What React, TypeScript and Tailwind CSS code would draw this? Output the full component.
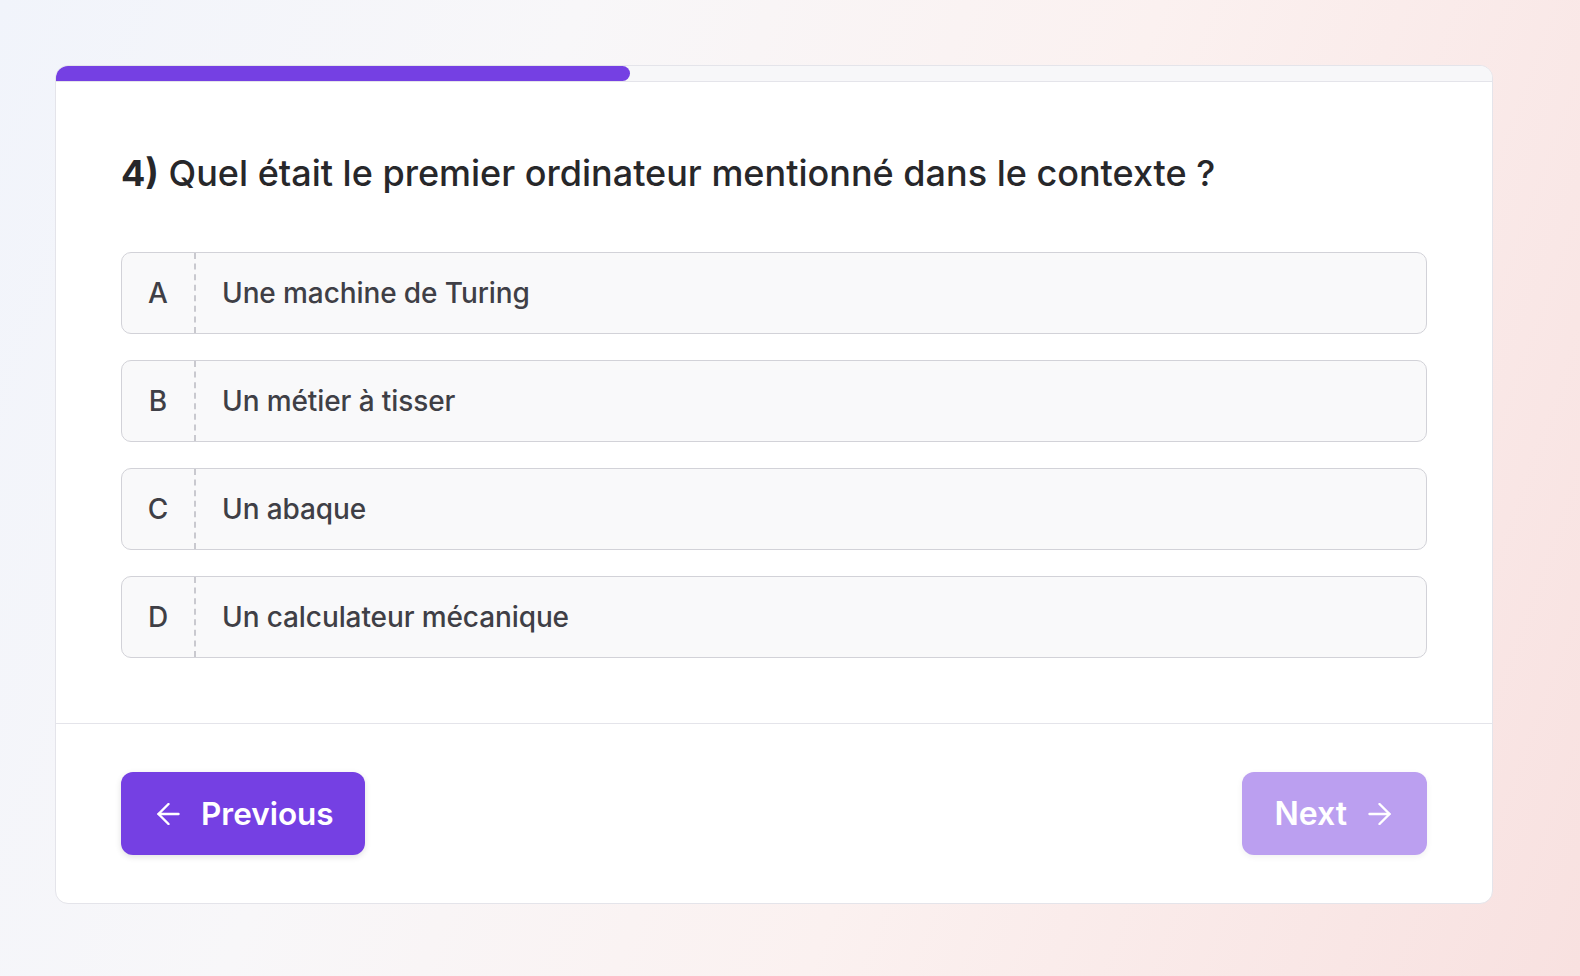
import React from "react";

const options = [
  { letter: "A", text: "Une machine de Turing" },
  { letter: "B", text: "Un métier à tisser" },
  { letter: "C", text: "Un abaque" },
  { letter: "D", text: "Un calculateur mécanique" },
];

function Arrow({ dir }: { dir: "left" | "right" }) {
  return (
    <svg
      width="23"
      height="22"
      viewBox="0 0 23 22"
      fill="none"
      stroke="currentColor"
      strokeWidth="2.4"
      strokeLinecap="round"
      strokeLinejoin="round"
      className={dir === "right" ? "rotate-180" : ""}
    >
      <path d="M21.5 11H1.5" />
      <path d="M11.5 1 1.5 11l10 10" />
    </svg>
  );
}

export default function App() {
  return (
    <div
      className="w-[1580px] h-[976px] overflow-hidden bg-[linear-gradient(110deg,#f1f4fb_0%,#f8f7f9_30%,#fbf1f0_60%,#f8e1e0_100%)] pt-[65px] pl-[55px]"
      style={{ fontFamily: "Inter, 'Noto Sans', sans-serif" }}
    >
      <div className="w-[1438px] rounded-[13px] border border-[#e4e4ea] bg-white overflow-hidden">
        <div className="h-[16px] bg-[#f7f7f9] border-b border-[#e4e4ea]">
          <div className="h-full w-[40%] bg-[#7540e3] rounded-r-full" />
        </div>
        <div className="px-[65px] pt-[69px] pb-[65px]">
          <h1 className="text-[36px] leading-[44px] font-medium text-[#27272a]">
            <span className="font-bold">4)</span> Quel était le premier ordinateur mentionné dans le contexte ?
          </h1>
          <div className="mt-[57px] flex flex-col gap-[26px]">
            {options.map((o) => (
              <div
                key={o.letter}
                className="h-[82px] flex items-stretch rounded-[10px] border-[1.5px] border-[#d2d2d8] bg-[#f9f9fa]"
              >
                <div className="w-[74px] flex items-center justify-center border-r-2 border-dashed border-[#c9c9cf] text-[28px] font-medium text-[#3f3f46]">
                  {o.letter}
                </div>
                <div className="flex items-center pl-[26px] text-[28px] font-medium text-[#3f3f46] tracking-[-0.1px]">
                  {o.text}
                </div>
              </div>
            ))}
          </div>
        </div>
        <div className="border-t border-[#e4e4ea] px-[65px] py-[48px] flex items-center justify-between">
          <button className="h-[83px] pl-[36px] pr-[31px] flex items-center gap-[21px] rounded-[12px] bg-[#7540e3] text-white text-[31.5px] font-semibold shadow-[0_2px_6px_rgba(0,0,0,0.12)]">
            <Arrow dir="left" />
            <span>Previous</span>
          </button>
          <button className="h-[83px] pl-[32px] pr-[36px] flex items-center gap-[21px] rounded-[12px] bg-[#bb9ff0] text-white text-[32px] font-semibold shadow-[0_2px_6px_rgba(0,0,0,0.06)]">
            <span>Next</span>
            <Arrow dir="right" />
          </button>
        </div>
      </div>
    </div>
  );
}
